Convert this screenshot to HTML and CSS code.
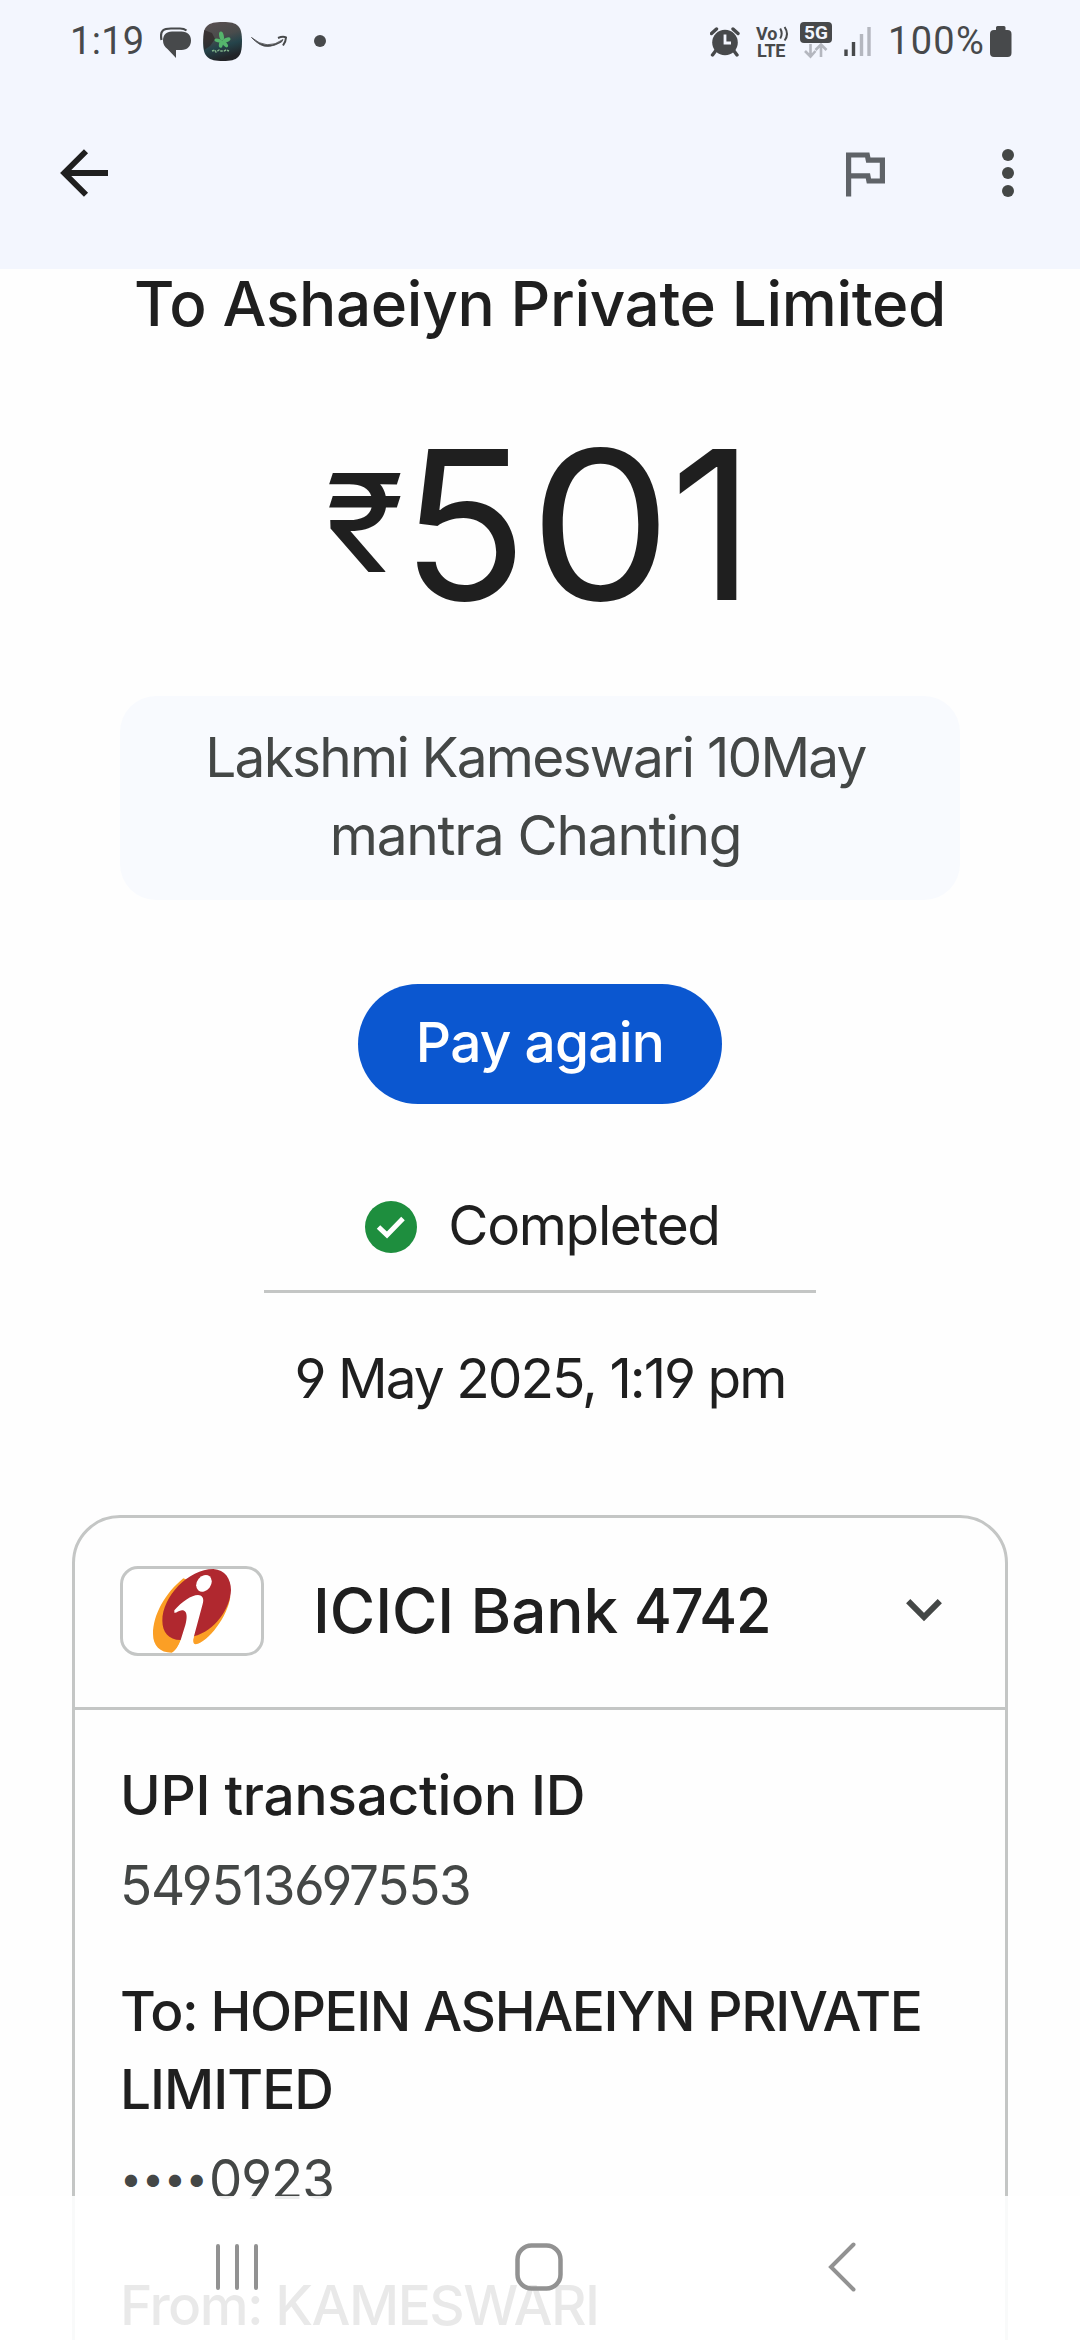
FILE: index.html
```html
<!DOCTYPE html>
<html lang="en">
<head>
<meta charset="utf-8">
<title>Payment details</title>
<link rel="stylesheet" href="styles.css">
</head>
<body>
<div class="screen">
  <header class="top">
    <div class="status">
      <span class="clock">1:19</span>
      <svg class="s-chat" width="32" height="40" viewBox="0 0 32 40"><path d="M1.500 18C-.5 8 4 6.500 11 6.500H20Q24 6.500 26.500 8.500" fill="none" stroke="#47494b" stroke-width="2.200"/><path d="M12 9.500H21.500C27.500 9.500 31 13 31 18.500S27.500 28 21.500 28H16V36L7.500 27C4.500 25 3 22 3 18.500 3 13 6 9.500 12 9.500Z" fill="#47494b"/></svg>
      <svg class="s-app" width="40" height="40" viewBox="0 0 40 40"><defs><linearGradient id="sky" x1="0" y1="0" x2=".3" y2="1"><stop offset="0" stop-color="#5b5052"/><stop offset=".45" stop-color="#4a4c4c"/><stop offset=".7" stop-color="#25444b"/><stop offset="1" stop-color="#222428"/></linearGradient></defs><path d="M20 0C35 0 39 4 39 19.500S35 39 20 39 0 35 0 19.500 4 0 20 0Z" fill="url(#sky)"/><path d="M1 8l8 3 3 6-5 7-6 4z" fill="#2a2222" opacity=".6"/><g fill="#55b56c"><ellipse cx="18.500" cy="14" rx="2.300" ry="4.500" transform="rotate(-12 18.500 14)"/><ellipse cx="23.500" cy="18" rx="2.100" ry="4.200" transform="rotate(68 23.500 18)"/><ellipse cx="22" cy="22" rx="2" ry="4" transform="rotate(-40 22 22)"/><ellipse cx="18" cy="22" rx="2" ry="3.800" transform="rotate(12 18 22)"/><ellipse cx="15" cy="18.500" rx="1.900" ry="3.600" transform="rotate(-80 15 18.500)"/></g><path d="M9 29l3-1 1 2 3-2 2 1 3 0 2-1 3 1" stroke="#7fb088" stroke-width="1.500" stroke-dasharray="2.500 1" fill="none"/></svg>
      <svg class="s-smile" width="37" height="40" viewBox="0 0 37 40"><path d="M.5 15.500Q16 29 32 17.500L30.500 20Q17 27.500 9 22.500 4 19.500.5 15.500Z" fill="#47494b" stroke="#47494b" stroke-width=".8"/><path d="M27 16Q32 14 35 15.500 35 19 32 23.500" fill="none" stroke="#47494b" stroke-width="2"/></svg>
      <span class="s-dot"></span>
      <svg class="s-alarm" width="30" height="40" viewBox="0 0 30 40"><circle cx="15" cy="20.500" r="12.800" fill="#47494b"/><path d="M1.500 11.500L6.500 7M23 7L28 11.500M5.500 29L2.500 33M24 29L27 33" stroke="#47494b" stroke-width="3.400" stroke-linecap="round"/><path d="M15 12.500V21H21" fill="none" stroke="#f3f6fe" stroke-width="2.800"/></svg>
      <span class="volte"><span class="vo">Vo<svg width="10" height="16" viewBox="0 0 10 16"><path d="M1.200 2.500Q4.200 7.500 1.200 12.500M5.600 1Q10.400 8 5.600 14.500" fill="none" stroke="#47494b" stroke-width="2"/></svg></span><span class="lte">LTE</span></span>
      <span class="net"><span class="five">5G</span><svg width="26" height="16" viewBox="0 0 26 16"><path d="M7.500 1V13M2 8L7.500 13.500 12.500 8M18 14V2M12.500 7L18 1.500 23.500 7" fill="none" stroke="#b4b7bf" stroke-width="2.600"/></svg></span>
      <svg class="s-sig" width="28" height="40" viewBox="0 0 28 40"><path d="M2 27.500V34M9.500 20V34" stroke="#47494b" stroke-width="3.400"/><path d="M17.500 12V34M25 5V34" stroke="#b4b7bf" stroke-width="3.400"/></svg>
      <span class="pct">100%</span>
      <svg class="s-batt" width="22" height="40" viewBox="0 0 22 40"><path d="M6 8V5.500Q6 4 7.500 4H14Q15.500 4 15.500 5.500V8H17.500Q21.500 8 21.500 12V31Q21.500 35 17.500 35H4Q0 35 0 31V12Q0 8 4 8Z" fill="#47494b"/></svg>
    </div>
    <div class="appbar">
      <svg class="back" width="48" height="48" viewBox="0 0 48 48"><path d="M26 2.200L4.200 24 26 45.800M4.500 24H48" fill="none" stroke="#1f1f1f" stroke-width="5.800"/></svg>
      <svg class="flag" width="62.400" height="62.400" viewBox="0 0 24 24"><path fill="#5f6368" d="M12.360 6l.4 2H18v6h-3.360l-.4-2H7V6h5.360M14 4H5v17h2v-7h5.600l.4 2h7V6h-5.600L14 4z"/></svg>
      <svg class="more" width="12" height="48" viewBox="0 0 12 48"><g fill="#444746"><circle cx="6" cy="6" r="6"/><circle cx="6" cy="24" r="6"/><circle cx="6" cy="42" r="6"/></g></svg>
    </div>
  </header>
  <main class="content">
    <h1 class="payee">To Ashaeiyn Private Limited</h1>
    <div class="amount"><span class="rupee">₹</span><span class="value">5<span class="zero">0</span>1</span></div>
    <div class="note"><span class="n1">Lakshmi Kameswari 10May</span><span class="n2">mantra Chanting</span></div>
    <button class="pay">Pay again</button>
    <div class="state">
      <svg width="52" height="52" viewBox="0 0 52 52"><circle cx="26" cy="26" r="26" fill="#1e8e3e"/><path d="M13.500 26L22 34 38 17.500" fill="none" stroke="#fff" stroke-width="5"/></svg>
      <span class="done">Completed</span>
    </div>
    <div class="rule"></div>
    <div class="date">9 May 2025, 1:19 pm</div>
    <section class="card">
      <div class="bank">
        <span class="logo"><svg width="138" height="84" viewBox="189 207 414 252"><path d="M370 235C315 280 279 345 279 402 279 437 300 458 335 458 348 452 360 430 370 405L403 405C398 420 398 432 407 433 445 425 503 350 511 290Z" fill="#fb9f25"/><path d="M460 207C495 209 513 237 513 270 511 325 465 393 401 409L362 420C325 420 307 395 307 362 307 290 385 207 460 207Z" fill="#b0282f"/><path d="M343 331C365 305 395 285 414 285 430 286 432 298 428 312L403 405Q395 425 401 436L399 462H334Q350 455 362 420L376 375C383 348 381 331 366 331 356 332 347 341 343 338Z" fill="#fff"/><ellipse cx="432" cy="250" rx="21" ry="27" transform="rotate(38 432 250)" fill="#fff"/></svg></span>
        <span class="bankname">ICICI Bank <span class="digits">4742</span></span>
        <svg class="chev" width="36" height="23" viewBox="0 0 36 23"><path d="M2.200 2.200L18 18 33.800 2.200" fill="none" stroke="#444746" stroke-width="6"/></svg>
      </div>
      <dl class="rows">
        <dt class="t1">UPI transaction ID</dt>
        <dd><span class="num">549513697553</span></dd>
        <dt><span class="t2">To: HOPEIN ASHAEIYN PRIVATE</span><br><span class="t3">LIMITED</span></dt>
        <dd class="acct"><span class="dots">••••</span><span class="num2">0923</span></dd>
        <dt class="t4">From: KAMESWARI</dt>
      </dl>
    </section>
  </main>
  <nav class="nav">
    <svg width="42" height="48" viewBox="0 0 42 48"><path d="M2 3V45M21 3V45M40 3V45" stroke="#929292" stroke-width="4" stroke-linecap="round"/></svg>
    <svg width="48" height="48" viewBox="0 0 48 48"><rect x="2.500" y="2.500" width="43" height="43" rx="14" fill="none" stroke="#929292" stroke-width="4.500"/></svg>
    <svg width="28" height="50" viewBox="0 0 28 50"><path d="M25.500 2.500L3 25 25.500 47.500" fill="none" stroke="#929292" stroke-width="4" stroke-linecap="round"/></svg>
  </nav>
</div>
</body>
</html>
```
FILE: styles.css
```css
* { box-sizing: border-box; }
body { margin: 0; }
.screen {
  position: relative;
  width: 1080px;
  height: 2340px;
  overflow: hidden;
  background: #fefefe;
  color: #1f1f1f;
  font: 400 55px/78px Inter, "Liberation Sans", sans-serif;
  font-feature-settings: "cv03", "cv04";
  white-space: nowrap;
}
svg { display: block; flex: none; }
.top { height: 269px; background: #f3f6fe; }

/* status bar */
.status {
  display: flex;
  height: 98px;
  padding: 22px 0 0 70px;
  color: #47494b;
}
.clock { width: 90px; font: 400 38px/39px Roboto, sans-serif; letter-spacing: .3px; }
.s-app { margin-left: 11px; }
.s-smile { margin-left: 8px; }
.s-dot { width: 12px; height: 12px; margin: 13px 0 0 26px; border-radius: 50%; background: #47494b; }
.s-alarm { margin-left: 384px; }
.volte { display: flex; flex-direction: column; width: 32px; margin: 4px 0 0 16px; font: 700 17px/16px Roboto, sans-serif; }
.vo { display: flex; gap: 1px; font-size: 18px; }
.lte { padding-left: 1px; letter-spacing: -.3px; font-size: 18px; line-height: 18px; }
.net { display: flex; flex-direction: column; align-items: center; width: 32px; margin-left: 12px; }
.five { width: 32px; height: 21px; border-radius: 4px; background: #47494b; color: #f3f6fe; font: 700 19px/22px Roboto, sans-serif; text-align: center; }
.s-sig { margin-left: 12px; }
.pct { width: 102px; margin-left: 16px; font: 400 38px/39px Roboto, sans-serif; letter-spacing: 1.3px; }

/* app bar */
.appbar { display: flex; align-items: center; height: 150px; padding-left: 60px; }
.flag { margin-left: 725px; }
.more { margin-left: 107px; }

/* summary */
.content { display: flex; flex-direction: column; align-items: center; }
.payee { margin: 5px 0 0; font-weight: 500; font-size: 62px; line-height: 60px; letter-spacing: -.35px; }
.amount { display: flex; width: 1080px; height: 208px; margin-top: 86px; padding-left: 325px; font-size: 208px; line-height: 208px; }
.rupee { width: 76px; font-size: 136px; line-height: 206px; transform: scaleX(1.08); transform-origin: left; }
.value { letter-spacing: 5.700px; }
.zero { display: inline-block; padding-left: 2px; margin-right: -2px; transform: scaleX(1.090); }
.note { display: flex; flex-direction: column; align-items: center; width: 840px; height: 204px; margin-top: 68px; padding: 22px 9px 0 0; border-radius: 36px; background: #f8fafe; color: #444746; }
.n1 { letter-spacing: -1.800px; }
.n2 { letter-spacing: -1.250px; }
.pay { width: 364px; height: 120px; margin-top: 84px; padding: 0 0 4px; border: 0; border-radius: 60px; background: #0b57d0; color: #fff; font: 500 55px/116px Inter, sans-serif; letter-spacing: -.770px; }
.state { display: flex; align-items: center; gap: 31px; height: 78px; margin-top: 82px; padding: 3px 0 0 5px; }
.done { margin-top: -3px; letter-spacing: -1.360px; }
.rule { width: 552px; height: 3px; margin-top: 26px; background: #c4c6c5; }
.date { margin-top: 46px; letter-spacing: -1.980px; }

/* details card */
.card { width: 936px; margin-top: 98px; border: 3px solid #c4c6c5; border-radius: 48px 48px 0 0; }
.bank { display: flex; align-items: center; height: 192px; padding: 0 63px 0 45px; border-bottom: 3px solid #c4c6c5; }
.logo { width: 144px; height: 90px; margin-top: -3px; border: 3px solid #c4c6c5; border-radius: 18px; overflow: hidden; background: #fff; }
.bankname { margin: -3px 0 0 49px; font-weight: 500; font-size: 62px; letter-spacing: -.1px; }
.digits { display: inline-block; letter-spacing: -1.2px; transform: scaleX(.93); transform-origin: left; }
.chev { margin: -5px 0 0 auto; }
.rows { margin: 0; padding: 46px 0 60px 45px; }
.rows dt { font-weight: 500; }
.rows dd { margin: 12px 0 48px; color: #444746; }
.num, .num2 { display: inline-block; transform-origin: left; }
.num { letter-spacing: -1.300px; transform: scaleX(.963); }
.num2 { letter-spacing: -1px; transform: scaleX(.96); }
.t1 { letter-spacing: -.300px; }
.t2 { letter-spacing: -1.430px; }
.t3 { letter-spacing: -1.000px; }
.t4 { letter-spacing: -1.550px; }
.acct { display: flex; }
.dots { width: 89px; font-size: 39px; line-height: 76px; }

/* translucent system navigation laid over the page */
.nav {
  position: absolute;
  inset: auto 0 0 0;
  display: flex;
  align-items: center;
  height: 144px;
  padding: 0 0 2px 216px;
  background: rgba(255, 255, 255, .9);
}
.nav svg:nth-child(2) { margin-left: 257px; }
.nav svg:nth-child(3) { margin-left: 265px; }
```
